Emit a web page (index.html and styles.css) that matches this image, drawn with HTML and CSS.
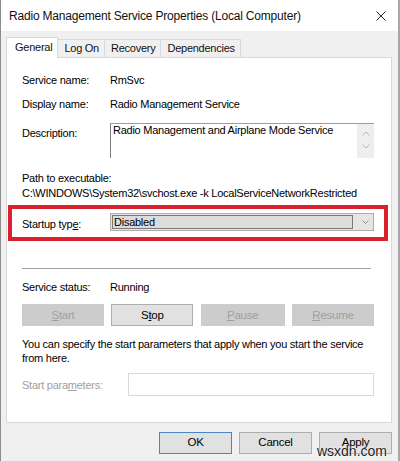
FILE: index.html
```html
<!DOCTYPE html>
<html>
<head>
<meta charset="utf-8">
<link rel="stylesheet" href="styles.css">
</head>
<body>
<div class="window">
  <div class="titlebar">
    <span class="title">Radio Management Service Properties (Local Computer)</span>
    <svg class="close" width="10" height="10" viewBox="0 0 10 10"><path d="M0.5 0.5 L9.5 9.5 M9.5 0.5 L0.5 9.5" stroke="#222" stroke-width="1" fill="none"/></svg>
  </div>
  <div class="tabs">
    <div class="tab active">General</div>
    <div class="tab">Log On</div>
    <div class="tab">Recovery</div>
    <div class="tab">Dependencies</div>
  </div>
  <div class="panel">
    <div class="row r-name"><span class="label">Service name:</span><span class="value">RmSvc</span></div>
    <div class="row r-display"><span class="label">Display name:</span><span class="value">Radio Management Service</span></div>
    <div class="row r-desc">
      <span class="label">Description:</span>
      <div class="textbox">
        <div class="tb-text">Radio Management and Airplane Mode Service</div>
        <div class="scrollbar">
          <svg width="8" height="5" viewBox="0 0 8 5"><path d="M0.5 4.5 L4 1 L7.5 4.5" stroke="#b5b5b5" fill="none"/></svg>
          <svg width="8" height="5" viewBox="0 0 8 5"><path d="M0.5 0.5 L4 4 L7.5 0.5" stroke="#b5b5b5" fill="none"/></svg>
        </div>
      </div>
    </div>
    <div class="path-label">Path to executable:</div>
    <div class="path-value">C:\WINDOWS\System32\svchost.exe -k LocalServiceNetworkRestricted</div>
    <div class="startup">
      <span class="label">Startup typ<u>e</u>:</span>
      <div class="combo">
        <div class="combo-sel">Disabled</div>
        <svg class="combo-arrow" width="7" height="4" viewBox="0 0 7 4"><path d="M0.5 0.5 L3.5 3.5 L6.5 0.5" stroke="#8a8a8a" fill="none"/></svg>
      </div>
    </div>
    <div class="separator"></div>
    <div class="row r-status"><span class="label">Service status:</span><span class="value">Running</span></div>
    <div class="buttons">
      <div class="btn disabled"><u>S</u>tart</div>
      <div class="btn">S<u>t</u>op</div>
      <div class="btn disabled"><u>P</u>ause</div>
      <div class="btn disabled"><u>R</u>esume</div>
    </div>
    <p class="note">You can specify the start parameters that apply when you start the service from here.</p>
    <div class="params">
      <span class="label dim">Start para<u>m</u>eters:</span>
      <div class="input"></div>
    </div>
  </div>
  <div class="footer">
    <div class="fbtn default">OK</div>
    <div class="fbtn">Cancel</div>
    <div class="fbtn">Apply</div>
  </div>
  <div class="watermark">wsxdn.com</div>
</div>
</body>
</html>
```

FILE: styles.css
```css
* { box-sizing: border-box; }
html, body { margin: 0; padding: 0; background: #f0f0f0; }
body {
  font-family: "Liberation Sans", Arial, sans-serif;
  font-size: 11px;
  letter-spacing: -0.25px;
  color: #000;
}
.window {
  position: relative;
  width: 400px;
  height: 461px;
  background: #f0f0f0;
  border-left: 1px solid #8c8c8c;
  border-right: 2px solid #a8a8a8;
  overflow: hidden;
}
.titlebar {
  height: 31px;
  background: #fff;
  display: flex;
  align-items: center;
  justify-content: space-between;
  padding: 0 12px 0 8px;
}
.title { font-size: 12px; letter-spacing: -0.2px; color: #111; }
.close { margin-top: 1px; }
.tabs {
  display: flex;
  align-items: flex-end;
  height: 26px;
  padding-left: 5px;
}
.tab {
  height: 18px;
  line-height: 16px;
  padding: 0 5px 0 6px;
  border: 1px solid #d9d9d9;
  border-bottom: none;
  border-left: none;
  background: #f0f0f0;
  color: #111;
}
.tab.active {
  height: 21px;
  line-height: 18px;
  background: #fff;
  border-left: 1px solid #d9d9d9;
  padding: 0 5px 0 8px;
  position: relative;
  top: 1px;
}
.panel {
  width: 386px;
  height: 366px;
  margin-left: 5px;
  background: #fff;
  border: 1px solid #d9d9d9;
  padding: 0 17px 0 15px;
}
.row { display: flex; align-items: center; height: 20px; }
.label { width: 88px; flex: none; }
.r-name { margin-top: 12px; }
.r-display { margin-top: 4px; }
.r-desc { margin-top: 9px; align-items: flex-start; height: auto; }
.r-desc .label { padding-top: 4px; }
.textbox {
  flex: 1;
  height: 35px;
  display: flex;
  border-top: 1px solid #9e9e9e;
  border-left: 1px solid #7d7d7d;
  background: #fff;
}
.tb-text { flex: 1; padding: 0 0 0 2px; line-height: 13px; }
.scrollbar {
  width: 17px;
  background: #eeeeee;
  display: flex;
  flex-direction: column;
  align-items: center;
  justify-content: space-between;
  padding: 7px 0 9px;
}
.path-label { margin-top: 13px; line-height: 15px; }
.path-value { line-height: 15px; }
.startup {
  margin: 4px -14px 0 -14px;
  height: 36px;
  border: 4px solid #d9222e;
  display: flex;
  align-items: center;
  padding: 0 10px;
}
.startup .label { padding-top: 1px; }
.combo {
  flex: 1;
  height: 18px;
  margin-top: -2px;
  background: #e5e5e5;
  border: 1px solid #adadad;
  display: flex;
  align-items: center;
  padding: 1px;
}
.combo-sel {
  width: 241px;
  height: 100%;
  border: 1px solid #7a7a7a;
  background: #dcdcdc;
  line-height: 13px;
  padding-left: 1px;
}
.combo-arrow { margin-left: 9px; }
.separator {
  height: 1px;
  background: #a0a0a0;
  margin: 27px 3px 0 0;
}
.r-status { margin-top: 9px; height: 17px; }
.buttons {
  margin-top: 9px;
  display: grid;
  grid-template-columns: 82px 82px 84px 82px;
  column-gap: 6px;
  justify-content: space-between;
}
.btn {
  height: 22px;
  line-height: 20px;
  text-align: center;
  background: #e1e1e1;
  border: 1px solid #adadad;
  font-size: 11.5px;
}
.btn.disabled { background: #cccccc; border-color: #cccccc; color: #a0a0a0; }
.note { margin: 11px 0 0; line-height: 14px; }
.params {
  margin-top: 8px;
  display: flex;
  align-items: center;
}
.params .label { width: 106px; }
.dim { color: #a0a0a0; }
.input {
  flex: 1;
  height: 23px;
  border: 1px solid #d9d9d9;
  background: #fff;
}
.footer {
  display: flex;
  justify-content: flex-end;
  gap: 7px;
  padding: 9px 6px 0 0;
}
.fbtn {
  width: 73px;
  height: 22px;
  line-height: 19px;
  text-align: center;
  background: #e1e1e1;
  border: 1px solid #adadad;
  font-size: 11.5px;
}
.fbtn.default { border-color: #4a86c5; }
.watermark {
  position: absolute;
  right: 11px;
  bottom: 2px;
  font-size: 14px;
  letter-spacing: 0;
  color: #222;
  text-shadow: 0 0 1px #fff, 0 0 2px #fff;
}
```
